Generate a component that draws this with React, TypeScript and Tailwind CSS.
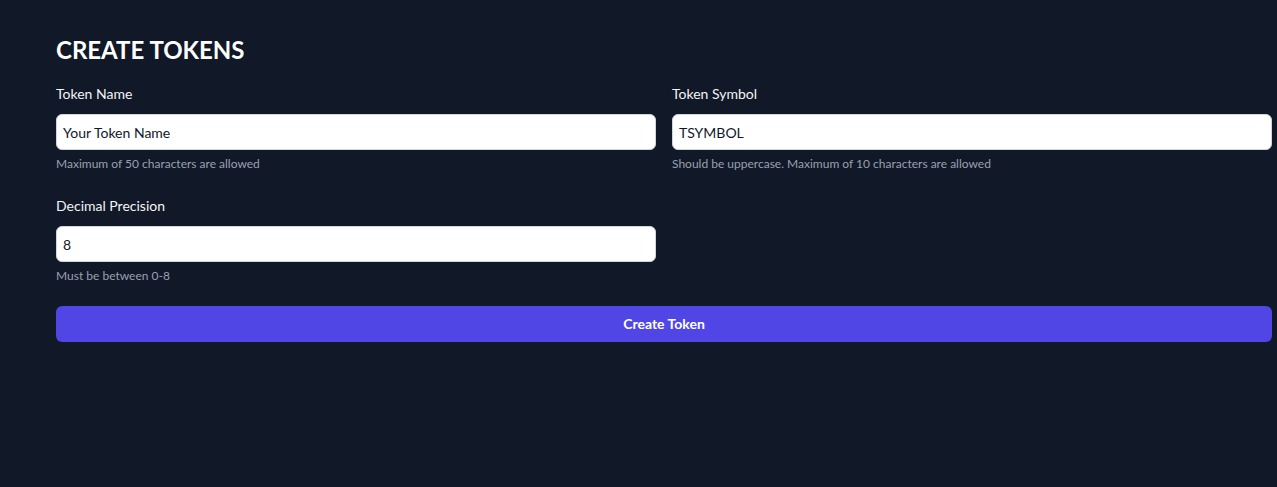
import React from "react";

const font = { fontFamily: "Lato, 'Noto Sans', sans-serif" };

function Field({
  label,
  value,
  help,
}: {
  label: string;
  value: string;
  help: string;
}) {
  return (
    <div className="flex flex-col">
      <label className="text-sm text-gray-100 mb-[10px]">{label}</label>
      <input
        defaultValue={value}
        className="h-9 w-full rounded-md border border-gray-300 bg-white px-[6px] text-sm text-gray-900 outline-none"
      />
      <p className="mt-[6px] text-xs text-gray-400">{help}</p>
    </div>
  );
}

export default function App() {
  return (
    <div
      className="min-h-[487px] w-full bg-[#111827] pl-14 pr-[5px] pt-[34px]"
      style={font}
    >
      <h1 className="text-2xl font-bold text-white mb-[18px]">CREATE TOKENS</h1>
      <div className="grid grid-cols-2 gap-x-4 gap-y-6">
        <Field
          label="Token Name"
          value="Your Token Name"
          help="Maximum of 50 characters are allowed"
        />
        <Field
          label="Token Symbol"
          value="TSYMBOL"
          help="Should be uppercase. Maximum of 10 characters are allowed"
        />
        <Field label="Decimal Precision" value="8" help="Must be between 0-8" />
      </div>
      <button className="mt-[22px] h-9 w-full rounded-md bg-[#4f46e5] text-sm font-bold text-white">
        Create Token
      </button>
    </div>
  );
}
